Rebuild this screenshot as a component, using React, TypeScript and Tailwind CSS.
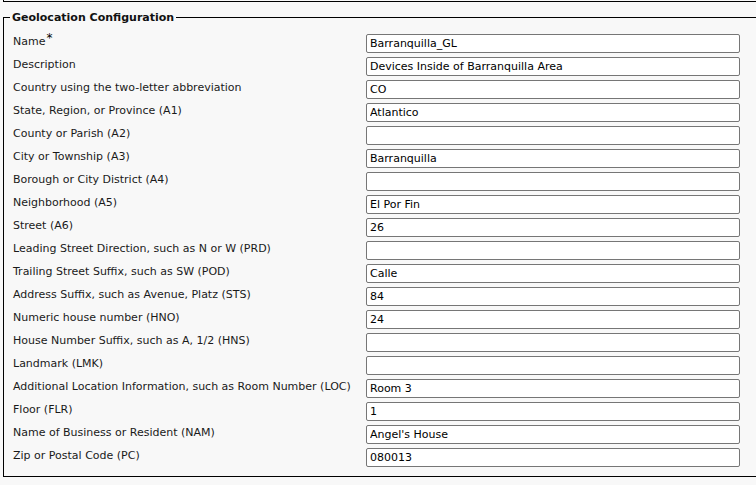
const rows: [string, string][] = [
  ["Name", "Barranquilla_GL"],
  ["Description", "Devices Inside of Barranquilla Area"],
  ["Country using the two-letter abbreviation", "CO"],
  ["State, Region, or Province (A1)", "Atlantico"],
  ["County or Parish (A2)", ""],
  ["City or Township (A3)", "Barranquilla"],
  ["Borough or City District (A4)", ""],
  ["Neighborhood (A5)", "El Por Fin"],
  ["Street (A6)", "26"],
  ["Leading Street Direction, such as N or W (PRD)", ""],
  ["Trailing Street Suffix, such as SW (POD)", "Calle"],
  ["Address Suffix, such as Avenue, Platz (STS)", "84"],
  ["Numeric house number (HNO)", "24"],
  ["House Number Suffix, such as A, 1/2 (HNS)", ""],
  ["Landmark (LMK)", ""],
  ["Additional Location Information, such as Room Number (LOC)", "Room 3"],
  ["Floor (FLR)", "1"],
  ["Name of Business or Resident (NAM)", "Angel's House"],
  ["Zip or Postal Code (PC)", "080013"],
];

export default function App() {
  return (
    <div className="w-[756px] h-[485px] overflow-hidden bg-[#f8f8f8] text-[11px] leading-[13px] text-[#1a1a1a] font-['DejaVu_Sans',Verdana,sans-serif]">
      <div className="ml-[3px] w-[800px] h-[2px] border-l border-b border-black" />
      <fieldset className="ml-[3px] mt-[9px] w-[800px] border border-black pl-[9px] pt-[10px] pb-[9px]">
        <legend className="-ml-[3px] px-[2px] font-bold text-[#111]">Geolocation Configuration</legend>
        <div className="flex flex-col gap-[4px]">
          {rows.map(([label, value], i) => (
            <div key={label} className="flex items-start">
              <div className="w-[353px] pt-px whitespace-nowrap">
                {label}
                {i === 0 && <span className="relative -top-[3px] ml-px text-[12px] text-black">*</span>}
              </div>
              <input
                readOnly
                value={value}
                className="w-[374px] h-[19px] px-[3px] bg-white border border-[#767676] rounded-[2px] text-[11px] text-black outline-none font-['DejaVu_Sans',Verdana,sans-serif]"
              />
            </div>
          ))}
        </div>
      </fieldset>
    </div>
  );
}
